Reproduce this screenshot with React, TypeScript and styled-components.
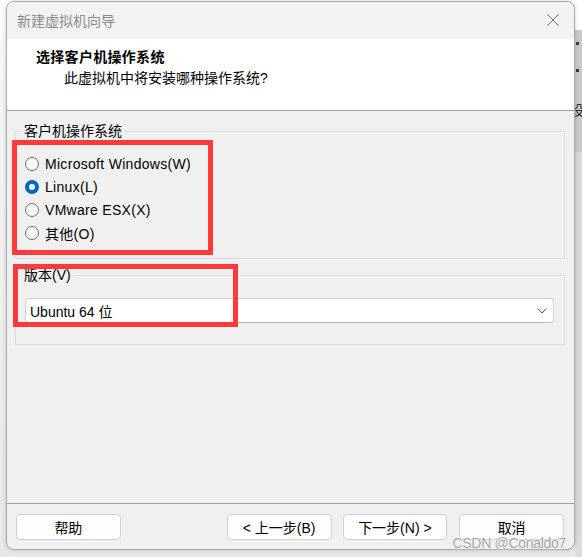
import * as React from 'react'
import styled, { createGlobalStyle } from 'styled-components'

const font = `"Liberation Sans", "Noto Sans CJK SC", sans-serif`

const GlobalStyle = createGlobalStyle`
  html, body {
    margin: 0;
    padding: 0;
  }
  body {
    width: 582px;
    height: 557px;
    overflow: hidden;
    font-family: ${font};
    font-size: 14px;
    color: #000;
    background: linear-gradient(to bottom, #ffffff 0, #f6f6f6 60px, #e8e8e8 100%);
  }
`

const Screen = styled.div`
  position: relative;
  display: flex;
  width: 582px;
  height: 557px;
`

const Window = styled.div`
  position: relative;
  margin: 1px 0 0 6px;
  width: 569px;
  height: 549px;
  box-sizing: border-box;
  display: flex;
  flex-direction: column;
  border: 1px solid #a9a9a9;
  border-radius: 8px;
  overflow: hidden;
  background: #f0f0f0;
  box-shadow: 0 0 5px rgba(0, 0, 0, 0.18);
`

const SideStrip = styled.div`
  flex: 1;
  display: flex;
  flex-direction: column;
  align-items: flex-start;
  padding-top: 42px;
  overflow: hidden;
  background: linear-gradient(
    to bottom,
    #ffffff 0,
    #ffffff 30px,
    #c9c9c9 30px,
    #c9c9c9 152px,
    #dcdcdc 152px
  );
`

const StripDot = styled.span<{ $top: number }>`
  width: 3px;
  height: 3px;
  margin: ${p => p.$top}px 0 0 1px;
  background: #3a3a3a;
`

const StripGlyph = styled.span`
  margin: 30px 0 0 -5px;
  font-size: 14px;
  line-height: 16px;
  color: #2b2b2b;
`

const TitleBar = styled.div`
  height: 37px;
  flex: none;
  display: flex;
  align-items: center;
  justify-content: space-between;
  padding: 0 0 2px 10px;
  box-sizing: border-box;
  background: #f2f2f2;
`

const Title = styled.span`
  color: #8a8a8a;
  font-size: 14px;
`

const CloseButton = styled.div`
  width: 42px;
  height: 35px;
  display: flex;
  align-items: center;
  justify-content: center;
`

const Header = styled.div`
  height: 72px;
  flex: none;
  box-sizing: border-box;
  padding: 8px 0 0 29px;
  background: #fff;
  border-bottom: 1px solid #a0a0a0;
`

const Heading = styled.div`
  font-weight: bold;
  line-height: 20px;
  letter-spacing: 0.3px;
`

const Subtitle = styled.div`
  line-height: 23px;
  padding-left: 28px;
`

const Body = styled.div`
  flex: 1;
  padding: 12px 9px 0 8px;
  display: flex;
  flex-direction: column;
  gap: 8px;
`

const Group = styled.fieldset<{ $pad: string }>`
  margin: 0;
  padding: ${p => p.$pad};
  border: 1px solid #dcdcdc;
  min-width: 0;
`

const Legend = styled.legend`
  padding: 0 3px;
  margin-left: -4px;
  line-height: 16px;
`

const RadioRow = styled.label`
  height: 23px;
  display: flex;
  align-items: center;
  gap: 6px;
  letter-spacing: 0.3px;
`

const RadioMark = styled.span<{ $on?: boolean }>`
  width: 14px;
  height: 14px;
  box-sizing: border-box;
  border-radius: 50%;
  border: ${p => (p.$on ? '4px solid #0067c0' : '1px solid #6f6f6f')};
  background: ${p => (p.$on ? '#fff' : '#f7f7f7')};
`

const Select = styled.div`
  height: 25px;
  margin-right: 1px;
  box-sizing: border-box;
  display: flex;
  align-items: center;
  justify-content: space-between;
  padding: 0 6px 0 4px;
  background: #fff;
  border: 1px solid #d3d3d3;
  border-bottom-color: #b8b8b8;
  border-radius: 3px;
`

const Footer = styled.div`
  height: 46px;
  flex: none;
  box-sizing: border-box;
  display: flex;
  align-items: flex-start;
  padding: 10px 10px 0 9px;
  border-top: 1px solid #a0a0a0;
`

const Button = styled.div<{ $gapLeft?: number }>`
  width: 105px;
  height: 26px;
  box-sizing: border-box;
  margin-left: ${p => p.$gapLeft ?? 0}px;
  display: flex;
  align-items: center;
  justify-content: center;
  background: #fdfdfd;
  border: 1px solid #d0d0d0;
  border-radius: 4px;
`

const Annotation = styled.div`
  position: absolute;
  box-sizing: border-box;
  border: 5px solid #fc3a3a;
  pointer-events: none;
`

const Watermark = styled.div`
  position: absolute;
  right: 16px;
  bottom: 6px;
  font-size: 14px;
  letter-spacing: -0.3px;
  color: #a3a3a3;
  text-shadow: 0 0 2px #fff, 0 0 1px #fff;
`

const options = [
  { label: 'Microsoft Windows(W)', on: false },
  { label: 'Linux(L)', on: true },
  { label: 'VMware ESX(X)', on: false },
  { label: '其他(O)', on: false },
]

export default function App() {
  return (
    <>
      <GlobalStyle />
      <Screen>
        <Window>
          <TitleBar>
            <Title>新建虚拟机向导</Title>
            <CloseButton>
              <svg width="12" height="12" viewBox="0 0 12 12">
                <path d="M0.5 0.5 L11.5 11.5 M11.5 0.5 L0.5 11.5" stroke="#6e6e6e" strokeWidth="1" fill="none" />
              </svg>
            </CloseButton>
          </TitleBar>
          <Header>
            <Heading>选择客户机操作系统</Heading>
            <Subtitle>此虚拟机中将安装哪种操作系统?</Subtitle>
          </Header>
          <Body>
            <Group $pad="13px 9px 14px">
              <Legend>客户机操作系统</Legend>
              {options.map(o => (
                <RadioRow key={o.label}>
                  <RadioMark $on={o.on} />
                  <span>{o.label}</span>
                </RadioRow>
              ))}
            </Group>
            <Group $pad="15px 9px 21px">
              <Legend>版本(V)</Legend>
              <Select>
                <span>Ubuntu 64 位</span>
                <svg width="10" height="6" viewBox="0 0 10 6">
                  <path d="M0.5 0.5 L5 5 L9.5 0.5" stroke="#555" strokeWidth="1" fill="none" />
                </svg>
              </Select>
            </Group>
          </Body>
          <Footer>
            <Button>帮助</Button>
            <Button $gapLeft={106}>&lt; 上一步(B)</Button>
            <Button $gapLeft={11}>下一步(N) &gt;</Button>
            <Button $gapLeft={12}>取消</Button>
          </Footer>
        </Window>
        <SideStrip>
          <StripDot $top={0} />
          <StripDot $top={24} />
          <StripGlyph>设</StripGlyph>
        </SideStrip>
        <Annotation style={{ left: 12, top: 140, width: 201, height: 115 }} />
        <Annotation style={{ left: 13, top: 264, width: 225, height: 63 }} />
        <Watermark>CSDN @Conaldo7</Watermark>
      </Screen>
    </>
  )
}
